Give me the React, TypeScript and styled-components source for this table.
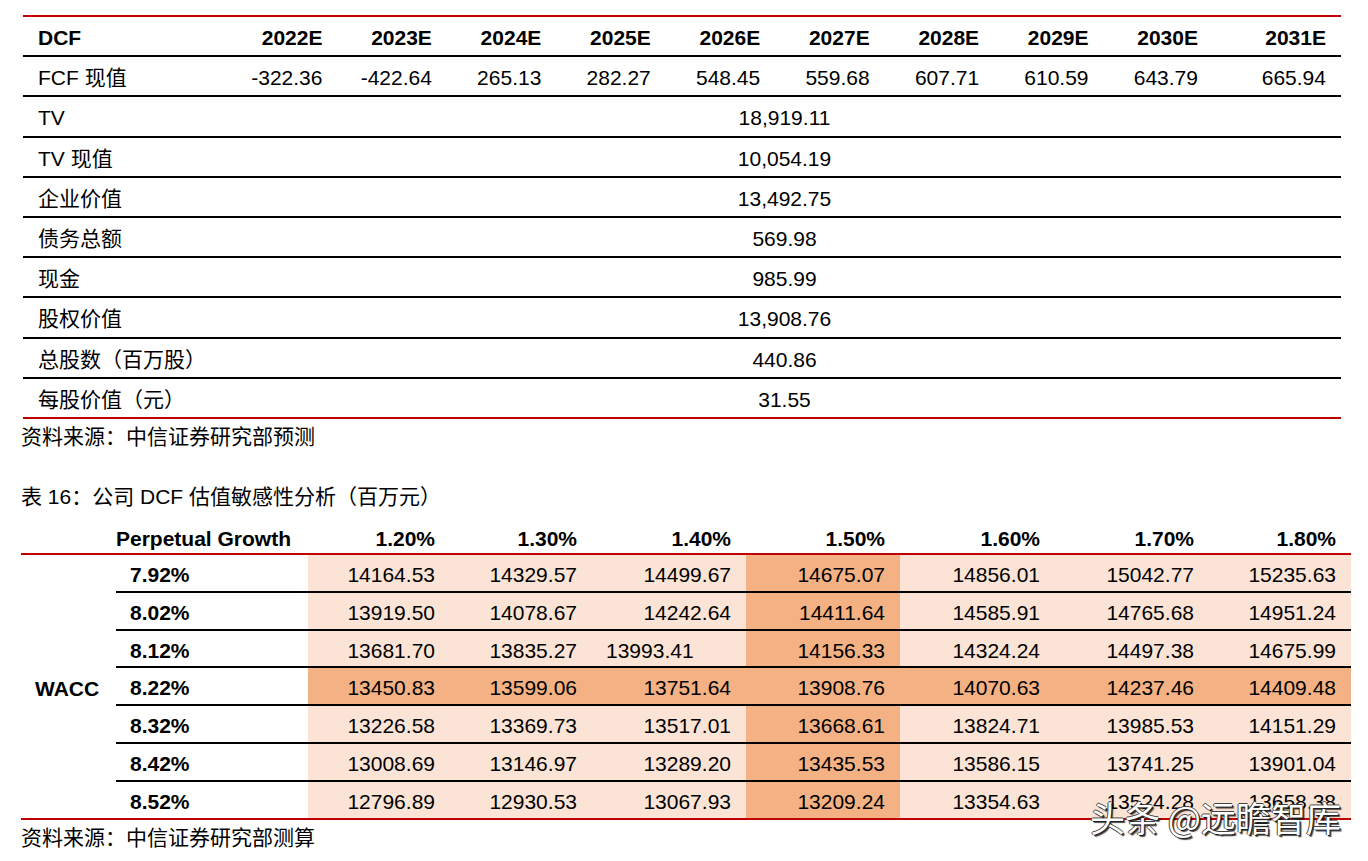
import styled, { createGlobalStyle } from "styled-components";

const GlobalStyle = createGlobalStyle`
  html, body {
    margin: 0;
    padding: 0;
    background: #fff;
  }
  body {
    font-family: "Liberation Sans", Arial, "Noto Sans CJK SC", sans-serif;
    color: #000;
  }
`;

const years = ["2022E", "2023E", "2024E", "2025E", "2026E", "2027E", "2028E", "2029E", "2030E", "2031E"];
const fcf = ["-322.36", "-422.64", "265.13", "282.27", "548.45", "559.68", "607.71", "610.59", "643.79", "665.94"];
const merged = [
  ["TV", "18,919.11"],
  ["TV 现值", "10,054.19"],
  ["企业价值", "13,492.75"],
  ["债务总额", "569.98"],
  ["现金", "985.99"],
  ["股权价值", "13,908.76"],
  ["总股数（百万股）", "440.86"],
  ["每股价值（元）", "31.55"],
];

const growth = ["1.20%", "1.30%", "1.40%", "1.50%", "1.60%", "1.70%", "1.80%"];
const sens: [string, string[]][] = [
  ["7.92%", ["14164.53", "14329.57", "14499.67", "14675.07", "14856.01", "15042.77", "15235.63"]],
  ["8.02%", ["13919.50", "14078.67", "14242.64", "14411.64", "14585.91", "14765.68", "14951.24"]],
  ["8.12%", ["13681.70", "13835.27", "13993.41", "14156.33", "14324.24", "14497.38", "14675.99"]],
  ["8.22%", ["13450.83", "13599.06", "13751.64", "13908.76", "14070.63", "14237.46", "14409.48"]],
  ["8.32%", ["13226.58", "13369.73", "13517.01", "13668.61", "13824.71", "13985.53", "14151.29"]],
  ["8.42%", ["13008.69", "13146.97", "13289.20", "13435.53", "13586.15", "13741.25", "13901.04"]],
  ["8.52%", ["12796.89", "12930.53", "13067.93", "13209.24", "13354.63", "13524.28", "13658.38"]],
];

const App = () => {
  return (
    <>
      <GlobalStyle />
      <Page>
        <DcfTable>
          <DcfRow>
            <LabelCell $bold>DCF</LabelCell>
            {years.map((y) => (
              <NumCell key={y} $bold>{y}</NumCell>
            ))}
          </DcfRow>
          <DcfRow>
            <LabelCell>FCF 现值</LabelCell>
            {fcf.map((v, i) => (
              <NumCell key={i}>{v}</NumCell>
            ))}
          </DcfRow>
          {merged.map(([label, value]) => (
            <DcfRow key={label}>
              <LabelCell>{label}</LabelCell>
              <MergedCell>{value}</MergedCell>
            </DcfRow>
          ))}
        </DcfTable>
        <Note>资料来源：中信证券研究部预测</Note>

        <Title>表 16：公司 DCF 估值敏感性分析（百万元）</Title>
        <SensHeader>
          <span />
          <HeadLabel>Perpetual Growth</HeadLabel>
          {growth.map((g) => (
            <HeadNum key={g}>{g}</HeadNum>
          ))}
        </SensHeader>
        <SensBody>
          <WaccLabel>WACC</WaccLabel>
          <SensRows>
            {sens.map(([wacc, values], r) => (
              <SensRow key={wacc}>
                <WaccValue>{wacc}</WaccValue>
                {values.map((v, c) => (
                  <ValueCell
                    key={c}
                    $dark={r === 3 || c === 3}
                    $left={r === 2 && c === 2}
                  >
                    {v}
                  </ValueCell>
                ))}
              </SensRow>
            ))}
          </SensRows>
        </SensBody>
        <Note>资料来源：中信证券研究部测算</Note>

        <Watermark>头条 @远瞻智库</Watermark>
      </Page>
    </>
  );
};

const Page = styled.div`
  position: relative;
  width: 1368px;
  height: 861px;
  padding: 15px 0 0 21px;
  box-sizing: border-box;
  overflow: hidden;
  font-size: 21px;
`;

const DcfTable = styled.div`
  width: 1318px;
  margin-left: 2px;
  border-top: 2px solid #c00000;
  border-bottom: 2px solid #c00000;
`;

const DcfRow = styled.div`
  display: grid;
  grid-template-columns: 205px repeat(9, 1fr) 128px;
  height: 38.2px;
  &:not(:last-child) {
    border-bottom: 2px solid #000;
  }
`;

const LabelCell = styled.div<{ $bold?: boolean }>`
  padding: 4px 0 0 15px;
  line-height: 34px;
  font-weight: ${(p) => (p.$bold ? 700 : 400)};
  white-space: nowrap;
`;

const NumCell = styled.div<{ $bold?: boolean }>`
  padding: 4px 15px 0 0;
  line-height: 34px;
  text-align: right;
  font-weight: ${(p) => (p.$bold ? 700 : 400)};
`;

const MergedCell = styled.div`
  grid-column: 2 / -1;
  padding-top: 4px;
  line-height: 34px;
  text-align: center;
`;

const Note = styled.div`
  height: 36px;
  line-height: 36px;
  white-space: nowrap;
`;

const Title = styled.div`
  margin-top: 24px;
  height: 36px;
  line-height: 36px;
  white-space: nowrap;
`;

const sensColumns = "95px 192px 142px 142px 154px 154px 155px 154px 142px";

const SensHeader = styled.div`
  display: grid;
  grid-template-columns: ${sensColumns};
  width: 1330px;
  height: 38px;
  padding-top: 10px;
  box-sizing: border-box;
  line-height: 28px;
  font-weight: 700;
`;

const HeadLabel = styled.div`
  white-space: nowrap;
`;

const HeadNum = styled.div`
  text-align: right;
  padding-right: 15px;
`;

const SensBody = styled.div`
  display: grid;
  grid-template-columns: 95px 1fr;
  width: 1330px;
  border-top: 2px solid #c00000;
  border-bottom: 2px solid #c00000;
`;

const WaccLabel = styled.div`
  display: flex;
  align-items: center;
  padding: 6px 0 0 14px;
  font-weight: 700;
`;

const SensRows = styled.div`
  display: flex;
  flex-direction: column;
`;

const SensRow = styled.div`
  display: grid;
  grid-template-columns: 192px 142px 142px 154px 154px 155px 154px 142px;
  height: 35.85px;
  line-height: 30px;
  &:not(:last-child) {
    border-bottom: 2px solid #000;
  }
`;

const WaccValue = styled.div`
  padding: 5px 0 0 14px;
  font-weight: 700;
`;

const ValueCell = styled.div<{ $dark?: boolean; $left?: boolean }>`
  padding: 5px 15px 0 14px;
  background: ${(p) => (p.$dark ? "#f4b183" : "#fbe4d5")};
  text-align: ${(p) => (p.$left ? "left" : "right")};
`;

const Watermark = styled.div`
  position: absolute;
  left: 1090px;
  top: 796px;
  font-family: "Noto Sans CJK SC", "Liberation Sans", sans-serif;
  font-size: 35px;
  line-height: 42px;
  color: #fff;
  white-space: nowrap;
  text-shadow: 1px 1px 0 #222, 2px 2px 1px rgba(0, 0, 0, 0.7), -1px 0 0 #444, 0 -1px 0 #444;
`;

export default App;
